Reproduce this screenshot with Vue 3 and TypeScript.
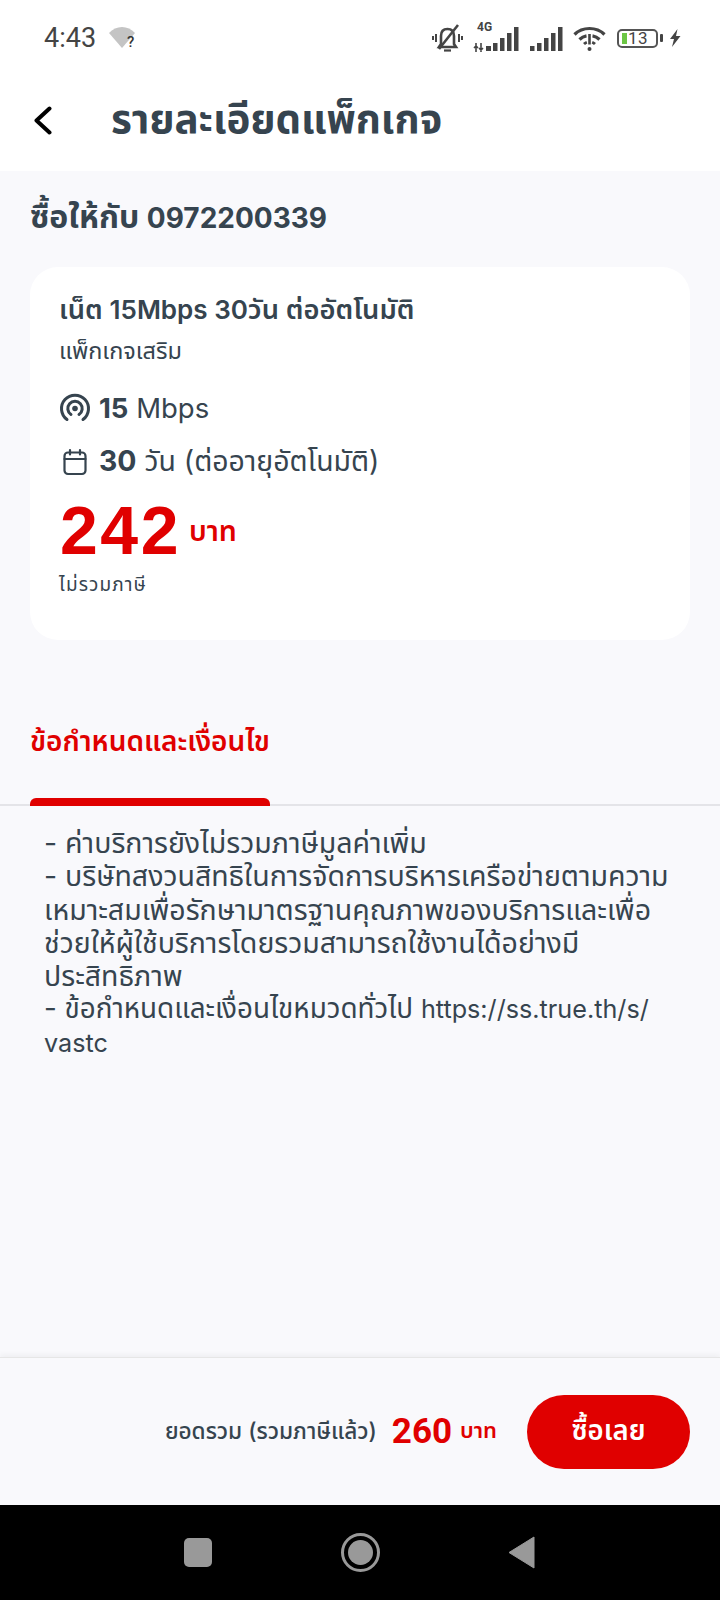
<template>
  <div class="screen">
    <div class="status-bar">
      <div class="status-left">
        <span class="clock">4:43</span>
        <svg class="wifi-off" width="28" height="24" viewBox="0 0 28 24">
          <path d="M1 7 C8 -1 20 -1 27 7 L14 22 Z" fill="#c4c4c4" />
          <text x="19" y="21" class="tiny-q">?</text>
        </svg>
      </div>
      <div class="status-right">
        <svg width="31" height="30" viewBox="0 0 31 30" fill="none" stroke="#444" stroke-width="2.6">
          <path d="M9 21 V13 C9 8 12 6 15.5 6 C19 6 22 8 22 13 V21 L24 24 H7 Z" />
          <path d="M12 27.5 H19" stroke-width="2.2" />
          <path d="M26 2 L7 26" />
          <path d="M4 11 V19 M1 13 V17 M27 11 V19 M30 13 V17" stroke-width="2" />
        </svg>
        <div class="signal-wrap">
          <span class="net-label">4G</span>
          <svg width="47" height="30" viewBox="0 0 47 30" fill="#444">
            <path d="M3 20 V29 M8 20 V29 M1 25 L3 23 L5 25 M6 25 L8 27 L10 25" fill="none" stroke="#444" stroke-width="1.6" />
            <rect x="13" y="23" width="5" height="5" />
            <rect x="20" y="20" width="4.5" height="8" />
            <rect x="27" y="15" width="4.5" height="13" />
            <rect x="34" y="10" width="4.5" height="18" />
            <rect x="41" y="4" width="4.5" height="24" />
          </svg>
        </div>
        <svg width="33" height="30" viewBox="0 0 33 30" fill="#444">
          <rect x="0" y="23" width="4.5" height="5" />
          <rect x="7" y="20" width="4.5" height="8" />
          <rect x="14" y="15" width="4.5" height="13" />
          <rect x="21" y="10" width="4.5" height="18" />
          <rect x="28" y="4" width="4.5" height="24" />
        </svg>
        <svg width="33" height="30" viewBox="0 0 33 30" fill="none" stroke="#444" stroke-width="3.2">
          <path d="M1.5 11.5 C9.5 3.5 23.5 3.5 31.5 11.5" />
          <path d="M6.5 16.5 C8.5 14.5 11 13.2 13.5 12.8 M19.5 12.8 C22 13.2 24.5 14.5 26.5 16.5" />
          <path d="M11 21 C11.8 20.2 12.8 19.6 13.8 19.2 M19.2 19.2 C20.2 19.6 21.2 20.2 22 21" stroke-width="2.8" />
          <path d="M16.5 11 V21.5" stroke-width="2.6" />
          <circle cx="16.5" cy="26" r="2" fill="#444" stroke="none" />
        </svg>
        <div class="battery">
          <span class="battery-fill"></span>
          <span class="battery-num">13</span>
          <span class="battery-cap"></span>
        </div>
        <svg class="bolt" width="12" height="18" viewBox="0 0 12 18">
          <path d="M8.5 0 L1 10 H5 L3 18 L11.5 7 H7 Z" fill="#444" />
        </svg>
      </div>
    </div>

    <header class="top-bar">
      <svg class="back" width="18" height="29" viewBox="0 0 18 29" fill="none" stroke="#000" stroke-width="4" stroke-linecap="round" stroke-linejoin="round">
        <path d="M15.5 2.5 L2.5 14.5 L15.5 26.5" />
      </svg>
      <h1>รายละเอียดแพ็กเกจ</h1>
    </header>

    <main class="content">
      <h2 class="buy-for">ซื้อให้กับ <span class="phone">0972200339</span></h2>

      <section class="card">
        <div class="pkg-name">เน็ต <span class="latin">15Mbps 30</span>วัน ต่ออัตโนมัติ</div>
        <div class="pkg-type">แพ็กเกจเสริม</div>
        <div class="spec speed">
          <svg width="32" height="30" viewBox="0 0 32 30" fill="none" stroke="#36444f" stroke-width="3" stroke-linecap="round">
            <path d="M8 26.5 A 13.5 13.5 0 1 1 24 26.5" />
            <path d="M12 21.5 A 7.2 7.2 0 1 1 20 21.5" />
            <circle cx="16" cy="15.5" r="2.8" fill="#36444f" stroke="none" />
          </svg>
          <span><b>15</b> Mbps</span>
        </div>
        <div class="spec days">
          <svg width="32" height="30" viewBox="0 0 32 30" fill="none" stroke="#36444f" stroke-width="2.2" stroke-linecap="round">
            <rect x="5.5" y="5.5" width="21" height="21.5" rx="3.5" />
            <path d="M5.5 12 H26.5 M11 3 V7.5 M21 3 V7.5" />
          </svg>
          <span><b>30</b> วัน (ต่ออายุอัตโนมัติ)</span>
        </div>
        <div class="price">
          <span class="price-num">242</span>
          <span class="price-unit">บาท</span>
        </div>
        <div class="tax-note">ไม่รวมภาษี</div>
      </section>

      <div class="tab-row">
        <div class="tab">
          <span>ข้อกำหนดและเงื่อนไข</span>
          <i class="tab-line"></i>
        </div>
      </div>

      <div class="terms">
        <div v-for="line in terms" :key="line">{{ line }}</div>
        <div class="terms-last">- ข้อกำหนดและเงื่อนไขหมวดทั่วไป <span class="url">https://ss.true.th/s/</span><wbr /><span class="url">vastc</span></div>
      </div>
    </main>

    <footer class="buy-bar">
      <span class="total-label">ยอดรวม (รวมภาษีแล้ว)</span>
      <span class="total-num">260</span>
      <span class="total-unit">บาท</span>
      <button class="buy-btn">ซื้อเลย</button>
    </footer>

    <nav class="nav-bar">
      <span class="nav-square"></span>
      <span class="nav-circle"><i></i></span>
      <svg width="27" height="33" viewBox="0 0 27 33">
        <path d="M26 1 V32 L1 16.5 Z" fill="#999" stroke="#999" stroke-width="1" stroke-linejoin="round" />
      </svg>
    </nav>
  </div>
</template>

<script setup lang="ts">
const terms: string[] = [
  '- ค่าบริการยังไม่รวมภาษีมูลค่าเพิ่ม',
  '- บริษัทสงวนสิทธิในการจัดการบริหารเครือข่ายตามความเหมาะสมเพื่อรักษามาตรฐานคุณภาพของบริการและเพื่อช่วยให้ผู้ใช้บริการโดยรวมสามารถใช้งานได้อย่างมีประสิทธิภาพ',
]
</script>

<style>
body {
  margin: 0;
}
</style>

<style scoped>
.screen {
  width: 720px;
  height: 1600px;
  display: flex;
  flex-direction: column;
  background: #f9f9fc;
  color: #36444f;
  font-family: Inter, "Noto Sans Thai", "Noto Sans", sans-serif;
  overflow: hidden;
}

.status-bar {
  height: 76px;
  flex: none;
  background: #fff;
  display: flex;
  align-items: center;
  justify-content: space-between;
  padding: 0 39px 0 44px;
  box-sizing: border-box;
}
.status-left {
  display: flex;
  align-items: center;
  gap: 12px;
}
.clock {
  font-family: Roboto, sans-serif;
  font-size: 27px;
  color: #444;
}
.tiny-q {
  font-family: Roboto, sans-serif;
  font-size: 15px;
  font-weight: 500;
  fill: #333;
}
.status-right {
  display: flex;
  align-items: center;
  gap: 10px;
}
.signal-wrap {
  position: relative;
  width: 47px;
  height: 30px;
}
.net-label {
  position: absolute;
  left: 4px;
  top: -3px;
  font-family: Roboto, sans-serif;
  font-size: 12px;
  font-weight: 700;
  color: #444;
}
.battery {
  position: relative;
  width: 41px;
  height: 19px;
  box-sizing: border-box;
  border: 2px solid #555;
  border-radius: 5px;
  margin-left: 1px;
  margin-right: 1px;
  display: flex;
  align-items: center;
}
.battery-fill {
  width: 5px;
  height: 11px;
  margin-left: 3px;
  background: #6cc644;
}
.battery-num {
  font-family: Roboto, sans-serif;
  font-size: 17px;
  color: #444;
  margin-left: 1px;
  letter-spacing: 0.5px;
}
.battery-cap {
  position: absolute;
  right: -7px;
  top: 3px;
  width: 3px;
  height: 8px;
  border-radius: 1px;
  background: #444;
}

.top-bar {
  height: 95px;
  flex: none;
  background: #fff;
  display: flex;
  align-items: center;
  padding: 0 0 6px 34px;
  box-sizing: border-box;
}
.back {
  margin-right: 59px;
}
.top-bar h1 {
  margin: 0;
  font-size: 40.3px;
  font-weight: 700;
  color: #36444f;
}

.content {
  flex: 1;
  min-height: 0;
}
.buy-for {
  margin: 24px 30px 0;
  font-size: 32px;
  line-height: 44px;
  font-weight: 700;
}
.phone {
  font-size: 28px;
  line-height: 1;
}
.card {
  margin: 28px 30px 0;
  height: 373px;
  box-sizing: border-box;
  padding: 23px 29px 0;
  background: #fff;
  border-radius: 28px;
}
.pkg-name {
  font-size: 27.3px;
  line-height: 40px;
  font-weight: 600;
}
.latin {
  font-size: 26px;
  line-height: 1;
}
.pkg-type {
  margin-top: 2px;
  font-size: 23.5px;
  line-height: 38px;
}
.spec {
  display: flex;
  align-items: center;
  gap: 8px;
  height: 54px;
}
.speed {
  margin-top: 11px;
  font-size: 27.5px;
}
.days {
  font-size: 28.4px;
}
.spec b {
  font-weight: 700;
}
.price {
  display: flex;
  align-items: baseline;
  gap: 8px;
  margin-top: 3px;
  margin-left: 1px;
  color: #e00000;
}
.price-num {
  font-size: 68px;
  line-height: 76px;
  font-weight: 700;
  letter-spacing: 2.5px;
  font-family: "Liberation Sans", sans-serif;
}
.price-unit {
  font-size: 28.5px;
  font-weight: 600;
  position: relative;
  top: -13px;
}
.tax-note {
  font-size: 19px;
  line-height: 28px;
  margin-top: 3px;
  letter-spacing: 1.1px;
}

.tab-row {
  margin-top: 72px;
  border-bottom: 2px solid #e4e4e8;
  padding-left: 30px;
}
.tab {
  display: inline-flex;
  flex-direction: column;
  color: #e00000;
  font-size: 28px;
  font-weight: 600;
  line-height: 58px;
  margin-bottom: -2px;
}
.tab-line {
  height: 8px;
  margin-top: 28px;
  background: #e00000;
  border-radius: 6px 6px 0 0;
}
.terms {
  margin: 20px 45px 0 44px;
  font-size: 28.5px;
  line-height: 33.3px;
}
.terms-last {
  font-size: 27.8px;
}
.url {
  font-size: 25.2px;
  line-height: 1;
}

.buy-bar {
  height: 148px;
  flex: none;
  box-sizing: border-box;
  border-top: 1px solid #e6e6e6;
  box-shadow: 0 -3px 5px rgba(0, 0, 0, 0.04);
  display: flex;
  align-items: center;
  justify-content: flex-end;
  padding-right: 30px;
  background: #f9f9fc;
}
.total-label {
  font-size: 22.6px;
  font-weight: 500;
}
.total-num {
  margin-left: 15px;
  font-family: Roboto, sans-serif;
  font-size: 35px;
  font-weight: 700;
  color: #e00000;
}
.total-unit {
  margin-left: 8px;
  font-size: 22px;
  font-weight: 600;
  color: #e00000;
}
.buy-btn {
  margin-left: 30px;
  width: 163px;
  height: 74px;
  border: 0;
  border-radius: 37px;
  background: #e00000;
  color: #fff;
  font-family: inherit;
  font-size: 27.5px;
  font-weight: 600;
}

.nav-bar {
  height: 95px;
  flex: none;
  background: #000;
  display: flex;
  align-items: center;
  padding-left: 184px;
}
.nav-square {
  width: 28px;
  height: 29px;
  background: #999;
  border-radius: 5px;
}
.nav-circle {
  width: 39px;
  height: 39px;
  margin-left: 129px;
  margin-right: 128px;
  border: 3px solid #999;
  border-radius: 50%;
  box-sizing: border-box;
  display: flex;
  align-items: center;
  justify-content: center;
}
.nav-circle i {
  width: 25px;
  height: 25px;
  border-radius: 50%;
  background: #999;
}
</style>
